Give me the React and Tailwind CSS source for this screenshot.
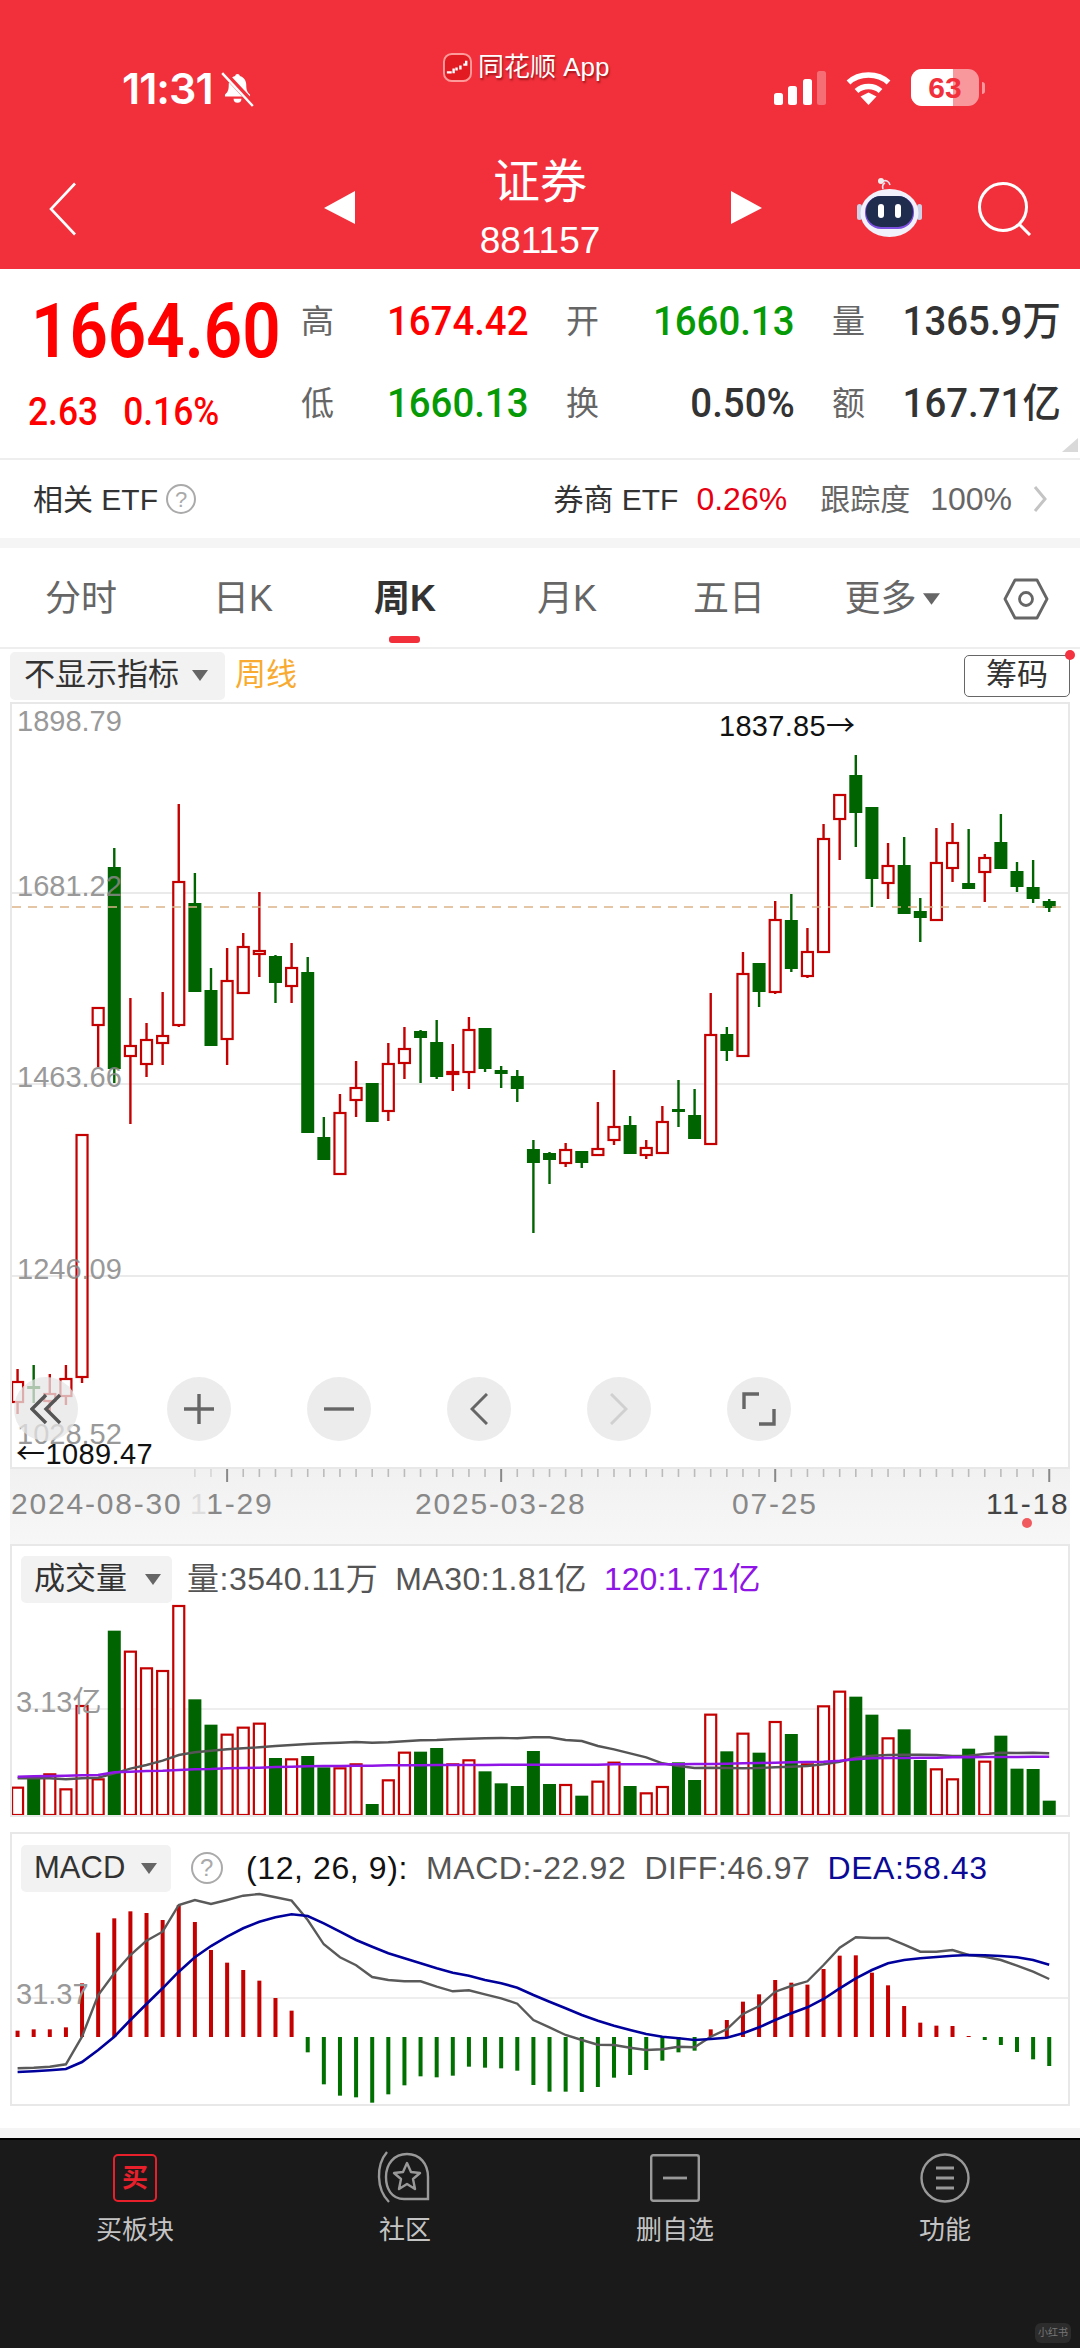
import React from 'react'

// [green?, wick top, body top, body bottom, wick bottom]
const candles = [
  [0, 1369, 1381, 1403, 1414], [1, 1365, 1386, 1389, 1403], [0, 1374, 1393, 1402, 1414], [0, 1365, 1378, 1397, 1405],
  [0, 1134, 1134, 1378, 1383], [0, 1007, 1007, 1026, 1067], [1, 848, 867, 1069, 1083], [0, 998, 1045, 1057, 1124],
  [0, 1023, 1039, 1065, 1077], [0, 992, 1035, 1044, 1065], [0, 804, 881, 1026, 1027], [1, 873, 903, 992, 992],
  [1, 968, 990, 1046, 1046], [0, 948, 980, 1040, 1065], [0, 933, 946, 994, 994], [0, 892, 950, 955, 977],
  [1, 955, 956, 983, 1003], [0, 943, 967, 987, 1003], [1, 957, 972, 1133, 1133], [1, 1117, 1137, 1160, 1160],
  [0, 1094, 1112, 1175, 1175], [0, 1061, 1087, 1101, 1117], [1, 1083, 1083, 1122, 1122], [0, 1043, 1063, 1112, 1121],
  [0, 1027, 1048, 1064, 1079], [1, 1030, 1031, 1038, 1083], [1, 1020, 1042, 1077, 1079], [0, 1044, 1071, 1075, 1091],
  [0, 1017, 1029, 1073, 1089], [1, 1028, 1028, 1069, 1072], [1, 1066, 1070, 1074, 1088], [1, 1070, 1076, 1089, 1102],
  [1, 1140, 1149, 1163, 1233], [1, 1152, 1153, 1160, 1184], [0, 1143, 1149, 1164, 1167], [1, 1151, 1151, 1163, 1168],
  [0, 1102, 1148, 1156, 1156], [0, 1070, 1126, 1141, 1145], [1, 1116, 1125, 1154, 1154], [0, 1140, 1147, 1156, 1159],
  [0, 1106, 1121, 1154, 1154], [1, 1080, 1109, 1112, 1127], [1, 1089, 1115, 1139, 1139], [0, 993, 1034, 1145, 1145],
  [1, 1027, 1034, 1051, 1061], [0, 952, 973, 1057, 1057], [1, 963, 963, 992, 1007], [0, 901, 919, 993, 994],
  [1, 894, 920, 969, 972], [0, 928, 951, 977, 978], [0, 824, 838, 953, 953], [0, 794, 794, 820, 860],
  [1, 755, 775, 813, 847], [1, 807, 807, 879, 907], [0, 843, 865, 884, 899], [1, 837, 865, 914, 914],
  [1, 898, 911, 918, 942], [0, 828, 862, 921, 921], [0, 823, 842, 869, 882], [1, 829, 883, 889, 889],
  [0, 854, 857, 873, 902], [1, 814, 842, 869, 869], [1, 862, 871, 887, 892], [1, 860, 887, 899, 903],
  [1, 899, 901, 908, 912],
]

const volTops = [770, 745, 730, 775, 525, 745, 302, 362, 412, 420, 225, 508, 584, 611, 590, 578, 684, 685, 678, 712, 712, 700, 822, 748, 665, 665, 654, 700, 688, 724, 760, 768, 663, 762, 762, 797, 752, 695, 768, 787, 768, 697, 750, 551, 664, 608, 668, 573, 612, 700, 526, 482, 500, 554, 622, 598, 690, 715, 745, 656, 692, 617, 716, 717, 812]
const ma30 = [745, 745, 745, 748, 745, 743, 730, 716, 705, 692, 675, 667, 662, 658, 655, 652, 648, 645, 642, 640, 638, 636, 638, 637, 634, 631, 630, 628, 626, 625, 624, 625, 622, 622, 630, 633, 648, 658, 670, 682, 700, 708, 714, 713, 714, 715, 714, 712, 710, 708, 703, 695, 683, 677, 675, 674, 674, 675, 678, 677, 672, 668, 669, 668, 670]
const ma120 = [740, 739, 738, 737, 736, 735, 727, 725, 723, 722, 720, 718, 717, 715, 714, 713, 711, 710, 709, 708, 708, 707, 707, 706, 706, 706, 705, 705, 705, 705, 704, 704, 704, 704, 704, 704, 704, 703, 703, 703, 703, 703, 702, 702, 701, 700, 699, 698, 697, 696, 695, 692, 688, 685, 684, 684, 683, 683, 682, 682, 681, 681, 681, 680, 680]
const macd = [632, 628, 628, 622, 490, 338, 295, 274, 279, 300, 255, 306, 390, 428, 450, 482, 534, 572, 697, 793, 827, 832, 848, 823, 796, 769, 772, 767, 740, 743, 745, 752, 795, 815, 815, 816, 801, 773, 765, 750, 722, 697, 692, 628, 600, 545, 523, 480, 488, 494, 447, 407, 406, 458, 496, 558, 608, 617, 618, 648, 660, 675, 696, 718, 738]
const diff = [745, 743, 740, 733, 650, 525, 460, 405, 362, 335, 255, 240, 252, 240, 227, 222, 232, 242, 300, 373, 412, 436, 471, 480, 484, 484, 500, 514, 511, 523, 535, 551, 600, 622, 645, 660, 674, 675, 683, 690, 688, 680, 682, 650, 628, 582, 558, 515, 498, 484, 435, 383, 352, 354, 354, 374, 395, 395, 390, 405, 410, 420, 437, 455, 477]
const dea = [756, 754, 751, 747, 726, 690, 650, 600, 552, 505, 455, 412, 378, 350, 325, 305, 292, 283, 288, 310, 335, 360, 380, 400, 415, 430, 445, 458, 467, 480, 490, 503, 525, 545, 565, 585, 602, 617, 630, 642, 650, 655, 660, 657, 653, 640, 622, 600, 580, 562, 537, 505, 475, 450, 430, 420, 415, 411, 407, 405, 406, 408, 412, 420, 434]

const RED = '#c40000'
const GREEN = '#006400'
const xAt = (i) => 17.56 + 16.12 * i
const linePoints = (arr, base) => arr.map((v, i) => `${xAt(i).toFixed(1)},${(base + v / 3).toFixed(1)}`).join(' ')

function Caret({ className }) {
  return (
    <svg viewBox="0 0 16 11" className={className}>
      <polygon points="0,0 16,0 8,11" fill="#666" />
    </svg>
  )
}

function Question({ className }) {
  return (
    <div className={`rounded-full border-2 border-[#aaa] text-[#aaa] flex items-center justify-center ${className}`}>?</div>
  )
}

function CandleChart() {
  return (
    <svg viewBox="12 704 1056 763" className="absolute inset-0 w-full h-full">
      <line x1="12" x2="1068" y1="893" y2="893" stroke="#eaeaea" strokeWidth="2" />
      <line x1="12" x2="1068" y1="1084" y2="1084" stroke="#eaeaea" strokeWidth="2" />
      <line x1="12" x2="1068" y1="1276" y2="1276" stroke="#eaeaea" strokeWidth="2" />
      {candles.map(([g, wt, bt, bb, wb], i) => {
        const x = xAt(i)
        const c = g ? GREEN : RED
        return (
          <g key={i}>
            <line x1={x} x2={x} y1={wt} y2={wb} stroke={c} strokeWidth="2.4" />
            {g ? (
              <rect x={x - 6.5} y={bt} width="13" height={bb - bt} fill={c} />
            ) : (
              <rect x={x - 5.5} y={bt + 1} width="11" height={bb - bt - 2} fill="#fff" stroke={c} strokeWidth="2.2" />
            )}
          </g>
        )
      })}
      <line x1="12" x2="1068" y1="907" y2="907" stroke="#dcb489" strokeWidth="1.6" strokeDasharray="9 7" />
    </svg>
  )
}

function VolumeChart() {
  return (
    <svg viewBox="12 1546 1056 269" className="absolute inset-0 w-full h-full">
      <line x1="26" x2="1068" y1="1709" y2="1709" stroke="#e8e8e8" strokeWidth="1.5" />
      {volTops.map((t, i) => {
        const x = xAt(i)
        const top = 1530 + t / 3
        return candles[i][0] ? (
          <rect key={i} x={x - 6.5} y={top} width="13" height={1815 - top} fill={GREEN} />
        ) : (
          <rect key={i} x={x - 5.5} y={top + 1} width="11" height={1814 - top} fill="#fff" stroke={RED} strokeWidth="2.2" />
        )
      })}
      <polyline points={linePoints(ma30, 1530)} fill="none" stroke="#555" strokeWidth="2.4" />
      <polyline points={linePoints(ma120, 1530)} fill="none" stroke="#8f14e6" strokeWidth="2.6" />
    </svg>
  )
}

function MacdChart() {
  return (
    <svg viewBox="12 1834 1056 270" className="absolute inset-0 w-full h-full">
      <line x1="26" x2="1068" y1="1998" y2="1998" stroke="#e8e8e8" strokeWidth="1.5" />
      {macd.map((v, i) => {
        const y = 1820 + v / 3
        const up = y < 2037
        return (
          <rect key={i} x={xAt(i) - 2} y={up ? y : 2037} width="4" height={Math.abs(y - 2037)} fill={up ? RED : '#007000'} />
        )
      })}
      <polyline points={linePoints(diff, 1820)} fill="none" stroke="#5a5a5a" strokeWidth="2.4" />
      <polyline points={linePoints(dea, 1820)} fill="none" stroke="#00009c" strokeWidth="2.6" />
    </svg>
  )
}

function AxisTicks() {
  const ticks = []
  for (let i = 11; i < 65; i++) {
    const major = i === 13 || i === 30 || i === 47 || i === 64
    ticks.push(
      <line key={i} x1={xAt(i) - 10} x2={xAt(i) - 10} y1="0" y2={major ? 13 : 8} stroke={major ? '#888' : '#bbb'} strokeWidth={major ? 2 : 1.6} opacity={i < 13 ? 0.5 : 1} />
    )
  }
  return (
    <svg viewBox="0 0 1060 16" className="absolute left-0 top-0 w-[1060px] h-[16px]">
      {ticks}
    </svg>
  )
}

function ZoomBtn({ children, className = '' }) {
  return <div className={`w-[64px] h-[64px] rounded-full bg-[#e6e6e6]/75 flex items-center justify-center ${className}`}>{children}</div>
}

function Robot() {
  return (
    <svg viewBox="0 0 65 60" className="w-[65px] h-[60px]">
      <path d="M26 12c-1-3 0-5 2-6M26 4c3-1 6 0 7 4" fill="none" stroke="#e8e8f4" strokeWidth="1.6" />
      <circle cx="24" cy="4" r="3" fill="#eee" />
      <rect x="0" y="27" width="5" height="16" rx="2.500" fill="#cdd0e6" />
      <rect x="60" y="27" width="5" height="16" rx="2.500" fill="#cdd0e6" />
      <ellipse cx="32.500" cy="36" rx="29" ry="24" fill="#f0f1fa" />
      <rect x="8" y="19" width="49" height="33" rx="16" fill="#7c4fe0" />
      <rect x="9" y="19" width="47" height="31" rx="15" fill="#1f2c4d" />
      <rect x="21" y="27" width="6" height="14" rx="3" fill="#fff" />
      <rect x="38" y="27" width="6" height="14" rx="3" fill="#fff" />
    </svg>
  )
}

export default function App() {
  return (
    <div className="w-[1080px] h-[2348px] bg-white flex flex-col overflow-hidden font-['Liberation_Sans','Noto_Sans_CJK_SC',sans-serif] text-[#333]">
      {/* top red header */}
      <div className="relative h-[269px] bg-[#f1303b] text-white shrink-0">
        <div className="absolute left-[443px] top-[52px] flex items-center gap-[6px] text-[26px] leading-[30px] [text-shadow:1px_2px_2px_rgba(90,0,0,.55)]">
          <svg viewBox="0 0 30 30" className="w-[29px] h-[29px]">
            <rect x="1" y="1" width="28" height="28" rx="8" fill="#e21a22" stroke="#ff9a9a" strokeWidth="2" />
            <path d="M4 20h5M11 16v5M14 15v3M18 13v4M21 12h3v-4" fill="none" stroke="#fff" strokeWidth="2.500" />
          </svg>
          <span>同花顺 App</span>
        </div>

        <div className="h-[150px] pt-[67px] pl-[122px] pr-[95px] flex items-start justify-between">
          <div className="flex items-center gap-[7px]">
            <span className="text-[43px] leading-[42px] font-semibold font-['Inter',sans-serif] tracking-[-1px]">11:31</span>
            <svg viewBox="0 0 24 24" className="w-[35px] h-[37px]">
              <path d="M12 2c-.9 0-1.500.6-1.600 1.400C7.600 4.200 6 6.600 6 9.500c0 3.500-.6 5-2.600 6.700v1.300h17.200v-1.300C18.600 14.500 18 13 18 9.500c0-2.900-1.600-5.300-4.400-6.100C13.500 2.600 12.900 2 12 2z" fill="#fff" />
              <path d="M9.300 19a2.700 2.700 0 0 0 5.400 0z" fill="#fff" />
              <line x1="2" y1="0.500" x2="23" y2="23" stroke="#f1303b" strokeWidth="4" />
              <line x1="1.500" y1="1.500" x2="22.500" y2="24" stroke="#fff" strokeWidth="1.700" />
            </svg>
          </div>
          <div className="flex items-center h-[39px] mt-[1px]">
            <svg viewBox="0 0 52 34" className="w-[52px] h-[34px] mr-[20px]">
              <rect x="0" y="22" width="9" height="12" rx="2.500" fill="#fff" />
              <rect x="14" y="15" width="9" height="19" rx="2.500" fill="#fff" />
              <rect x="29" y="8" width="9" height="26" rx="2.500" fill="#fff" />
              <rect x="43" y="0" width="9" height="34" rx="2.500" fill="#fff" fillOpacity="0.3" />
            </svg>
            <svg viewBox="0 0 45 34" className="w-[45px] h-[34px] mr-[20px]">
              <path d="M2.500 11.500C13 1.500 32 1.500 42.500 11.500" fill="none" stroke="#fff" strokeWidth="5.500" />
              <path d="M10.500 20C17 14 28 14 34.500 20" fill="none" stroke="#fff" strokeWidth="5.500" />
              <polygon points="22.500,34 14.500,25.500 22.500,21.500 30.500,25.500" fill="#fff" />
            </svg>
            <div className="relative w-[68px] h-[37px] rounded-[11px] bg-white/50 overflow-hidden">
              <div className="w-[42px] h-full bg-white" />
              <span className="absolute inset-0 flex items-center justify-center text-[30px] font-bold text-[#f1303b]">63</span>
            </div>
            <div className="w-[3px] h-[12px] ml-[3px] rounded-r-full bg-white/50" />
          </div>
        </div>

        <div className="flex items-center h-[103px] relative">
          <svg viewBox="0 0 28 54" className="absolute left-[49px] top-[32px] w-[28px] h-[54px]">
            <polyline points="26,1.500 2,27 26,52.500" fill="none" stroke="#fff" strokeWidth="2.600" />
          </svg>
          <svg viewBox="0 0 31 33" className="absolute left-[324px] top-[41px] w-[31px] h-[33px]">
            <polygon points="31,0 31,33 0,17" fill="#fff" />
          </svg>
          <div className="mx-auto mt-[13px] flex flex-col items-center">
            <span className="text-[47px] leading-[52px]">证券</span>
            <span className="text-[37px] leading-[40px] mt-[13px]">881157</span>
          </div>
          <svg viewBox="0 0 31 33" className="absolute left-[731px] top-[41px] w-[31px] h-[33px]">
            <polygon points="0,0 0,33 31,17" fill="#fff" />
          </svg>
          <div className="absolute left-[857px] top-[27px]"><Robot /></div>
          <svg viewBox="0 0 54 54" className="absolute left-[978px] top-[32px] w-[54px] h-[54px]">
            <circle cx="25" cy="25" r="23.500" fill="none" stroke="#fff" strokeWidth="3" />
            <line x1="41" y1="42" x2="52" y2="53" stroke="#fff" strokeWidth="3" />
          </svg>
        </div>
      </div>

      {/* quote summary */}
      <div className="relative h-[191px] border-b-2 border-[#eeeeee] flex shrink-0">
        <div className="w-[301px] pl-[31px] pt-[27px] font-['Roboto',sans-serif]">
          <div className="h-[70px] text-[76px] leading-[70px] font-semibold text-[#ff0000]">
            <span className="inline-block origin-left scale-x-[.885]">1664.60</span>
          </div>
          <div className="-ml-[3px] mt-[28px] text-[38px] leading-[36px] text-[#ff0000] font-medium">
            <span className="inline-flex gap-[27px] origin-left scale-x-[.93]">
              <span>2.63</span>
              <span>0.16%</span>
            </span>
          </div>
        </div>
        <div className="grid grid-cols-[228px_229px_229px] gap-x-[37px] grid-rows-[82px_82px] pt-[12px] text-[#666] text-[33px]">
          {[
            ['高', '1674.42', 'text-[#ff0000]'],
            ['开', '1660.13', 'text-[#069a06]'],
            ['量', '1365.9万', 'text-[#333]'],
            ['低', '1660.13', 'text-[#069a06]'],
            ['换', '0.50%', 'text-[#333]'],
            ['额', '167.71亿', 'text-[#333]'],
          ].map(([label, value, color]) => (
            <div key={label} className="flex items-center justify-between">
              <span>{label}</span>
              <span className={`inline-block origin-right scale-x-[.96] text-[40px] font-medium font-['Roboto','Noto_Sans_CJK_SC',sans-serif] ${color}`}>{value}</span>
            </div>
          ))}
        </div>
        <svg viewBox="0 0 16 14" className="absolute right-[2px] bottom-[6px] w-[16px] h-[14px]">
          <polygon points="16,0 16,14 0,14" fill="#d9d9d9" />
        </svg>
      </div>

      {/* related ETF */}
      <div className="h-[78px] flex items-center justify-between pl-[33px] pr-[33px] text-[30px] shrink-0">
        <div className="flex items-center gap-[8px] text-[#333]">
          <span>相关 ETF</span>
          <Question className="w-[30px] h-[30px] text-[22px]" />
        </div>
        <div className="flex items-center text-[#666]">
          <span className="text-[#333]">券商 ETF</span>
          <span className="ml-[18px] text-[32px] text-[#e60012]">0.26%</span>
          <span className="ml-[33px]">跟踪度</span>
          <span className="ml-[20px] text-[32px]">100%</span>
          <svg viewBox="0 0 14 26" className="w-[14px] h-[26px] ml-[21px]">
            <polyline points="2,1 12,13 2,25" fill="none" stroke="#c4c4c4" strokeWidth="3" />
          </svg>
        </div>
      </div>
      <div className="h-[10px] bg-[#f5f5f5] shrink-0" />

      {/* period tabs */}
      <div className="h-[101px] pt-[3px] border-b-2 border-[#eeeeee] flex items-center text-[36px] text-[#666] shrink-0">
        <div className="w-[162px] text-center">分时</div>
        <div className="w-[162px] text-center">日K</div>
        <div className="relative w-[162px] text-center font-bold text-[#333]">
          周K
          <div className="absolute left-[65px] top-[64px] w-[31px] h-[7px] rounded-[3px] bg-[#f1303b]" />
        </div>
        <div className="w-[162px] text-center">月K</div>
        <div className="w-[162px] text-center">五日</div>
        <div className="w-[162px] flex items-center justify-center gap-[6px] pl-[2px]">
          更多
          <Caret className="w-[17px] h-[12px]" />
        </div>
        <div className="flex-1 flex justify-center">
          <svg viewBox="0 0 46 42" className="w-[46px] h-[42px]">
            <polygon points="12,2 34,2 44,21 34,40 12,40 2,21" fill="none" stroke="#666" strokeWidth="2.800" strokeLinejoin="round" />
            <circle cx="23" cy="21" r="6.500" fill="none" stroke="#666" strokeWidth="2.800" />
          </svg>
        </div>
      </div>

      {/* indicator toolbar */}
      <div className="h-[53px] flex items-center px-[10px] text-[31px] shrink-0">
        <div className="h-[48px] w-[215px] rounded-[5px] bg-[#f2f2f2] flex items-center pl-[14px] gap-[13px] text-[#333]">
          <span>不显示指标</span>
          <Caret className="w-[16px] h-[11px]" />
        </div>
        <span className="ml-[10px] text-[#f8ab30]">周线</span>
        <div className="relative ml-auto w-[106px] h-[42px] rounded-[5px] border-[1.5px] border-[#666] flex items-center justify-center text-[#333]">
          筹码
          <div className="absolute -right-[6px] -top-[6px] w-[10px] h-[10px] rounded-full bg-[#f5323f]" />
        </div>
      </div>

      {/* candlestick panel */}
      <div className="relative mx-[10px] h-[767px] border-2 border-[#e8e8e8] shrink-0 text-[29px] leading-[29px]">
        <CandleChart />
        <span className="absolute left-[5px] top-[3px] text-[#999]">1898.79</span>
        <span className="absolute left-[5px] top-[168px] text-[#888] opacity-85">1681.22</span>
        <span className="absolute left-[5px] top-[359px] text-[#888] opacity-85">1463.66</span>
        <span className="absolute left-[5px] top-[551px] text-[#888] opacity-85">1246.09</span>
        <span className="absolute left-[5px] top-[716px] text-[#999]">1028.52</span>
        <span className="absolute left-[707px] top-[5px] text-[#111] tracking-[.3px]">1837.85<span className="font-['Noto_Sans_CJK_SC',sans-serif]">→</span></span>
        <div className="absolute left-[2px] top-[673px] flex gap-[76px]">
          <ZoomBtn className="mr-[13px]">
            <svg viewBox="0 0 32 32" className="w-[32px] h-[32px]">
              <polyline points="16,2 2,16 16,30" fill="none" stroke="#555" strokeWidth="3.400" />
              <polyline points="30,2 16,16 30,30" fill="none" stroke="#555" strokeWidth="3.400" />
            </svg>
          </ZoomBtn>
          <ZoomBtn>
            <svg viewBox="0 0 30 30" className="w-[30px] h-[30px]">
              <path d="M0 15h30M15 0v30" stroke="#666" strokeWidth="3.400" />
            </svg>
          </ZoomBtn>
          <ZoomBtn>
            <svg viewBox="0 0 30 30" className="w-[30px] h-[30px]">
              <path d="M0 15h30" stroke="#666" strokeWidth="3.400" />
            </svg>
          </ZoomBtn>
          <ZoomBtn>
            <svg viewBox="0 0 18 32" className="w-[18px] h-[32px]">
              <polyline points="17,1 2,16 17,31" fill="none" stroke="#666" strokeWidth="3" />
            </svg>
          </ZoomBtn>
          <ZoomBtn>
            <svg viewBox="0 0 18 32" className="w-[18px] h-[32px]">
              <polyline points="1,1 16,16 1,31" fill="none" stroke="#d0d0d0" strokeWidth="3" />
            </svg>
          </ZoomBtn>
          <ZoomBtn>
            <svg viewBox="0 0 34 34" className="w-[34px] h-[34px]">
              <path d="M2 17V2h15M32 17v15H17" fill="none" stroke="#666" strokeWidth="3.400" />
            </svg>
          </ZoomBtn>
        </div>
        <span className="absolute left-[4px] top-[733px] text-[#111] tracking-[.4px]"><span className="font-['Noto_Sans_CJK_SC',sans-serif]">←</span>1089.47</span>
      </div>

      {/* date axis */}
      <div className="relative mx-[10px] h-[75px] bg-gradient-to-b from-[#f1f1f1] to-[#f7f7f7] text-[#888] text-[30px] leading-[30px] tracking-[1.8px] shrink-0">
        <AxisTicks />
        <span className="absolute left-[1px] top-[20px]">2024-08-30</span>
        <span className="absolute left-[180px] top-[20px]"><span className="opacity-20">1</span>1-29</span>
        <span className="absolute left-[405px] top-[20px]">2025-03-28</span>
        <span className="absolute left-[722px] top-[20px]">07-25</span>
        <span className="absolute left-[976px] top-[20px] text-[#444]">11-18</span>
        <div className="absolute left-[1012px] top-[49px] w-[10px] h-[10px] rounded-full bg-[#f05a5f]" />
      </div>

      {/* volume panel */}
      <div className="relative mx-[10px] h-[273px] border-2 border-[#e8e8e8] shrink-0">
        <VolumeChart />
        <div className="relative flex items-center pt-[9px] pl-[9px] text-[32px] tracking-[.5px] text-[#555]">
          <div className="w-[151px] h-[47px] rounded-[5px] bg-[#f2f2f2] flex items-center pl-[13px] gap-[18px] text-[31px] tracking-normal text-[#333]">
            <span>成交量</span>
            <Caret className="w-[16px] h-[11px]" />
          </div>
          <span className="ml-[15px]">量:3540.11万</span>
          <span className="ml-[17px]">MA30:1.81亿</span>
          <span className="ml-[17px] tracking-normal text-[#8f14e6]">120:1.71亿</span>
        </div>
        <span className="absolute left-[4px] top-[142px] text-[29px] leading-[29px] text-[#999]">3.13亿</span>
      </div>
      <div className="h-[15px] shrink-0" />

      {/* macd panel */}
      <div className="relative mx-[10px] h-[274px] border-2 border-[#e8e8e8] shrink-0">
        <MacdChart />
        <div className="relative flex items-center pt-[10px] pl-[9px] text-[32px] tracking-[.6px] text-[#555]">
          <div className="w-[150px] h-[47px] rounded-[5px] bg-[#f2f2f2] flex items-center pl-[13px] gap-[16px] text-[31px] tracking-normal text-[#333]">
            <span>MACD</span>
            <Caret className="w-[16px] h-[11px]" />
          </div>
          <Question className="ml-[20px] w-[32px] h-[32px] text-[24px] text-[#999]" />
          <span className="ml-[23px] text-[#111]">(12, 26, 9):</span>
          <span className="ml-[18px]">MACD:-22.92</span>
          <span className="ml-[18px]">DIFF:46.97</span>
          <span className="ml-[17px] text-[#0a0a96]">DEA:58.43</span>
        </div>
        <span className="absolute left-[4px] top-[146px] text-[29px] leading-[29px] text-[#999]">31.37</span>
      </div>
      <div className="h-[22px] shrink-0" />
      <div className="h-[10px] bg-[#f5f5f5] shrink-0" />

      {/* bottom action bar */}
      <div className="relative flex-1 bg-[#1a1a1a] border-t-2 border-black grid grid-cols-4 items-start pt-[14px] text-[26px] leading-[30px] text-[#c4c4c4]">
        <div className="flex flex-col items-center">
          <div className="w-[44px] h-[48px] rounded-[5px] border-[2.5px] border-[#e8202c] flex items-center justify-center text-[#e8202c] text-[26px] font-bold">买</div>
          <span className="mt-[13px]">买板块</span>
        </div>
        <div className="flex flex-col items-center">
          <svg viewBox="0 0 54 52" className="w-[54px] h-[52px] -mt-[3px] -ml-[2px]">
            <path d="M10 1C-1 14 -1 38 12 51" fill="none" stroke="#999" strokeWidth="2.400" />
            <path d="M50 48H27C14 48 9 37 9 26 9 13 17 3 30 3s21 10 21 23v22z" fill="none" stroke="#999" strokeWidth="2.400" />
            <polygon points="30,12 34,21 43,22 36,28 38,38 30,33 22,38 24,28 17,22 26,21" fill="none" stroke="#999" strokeWidth="2.400" strokeLinejoin="round" />
          </svg>
          <span className="mt-[12px]">社区</span>
        </div>
        <div className="flex flex-col items-center">
          <svg viewBox="0 0 50 48" className="w-[50px] h-[48px]">
            <rect x="1.200" y="1.200" width="47.600" height="45.600" rx="2" fill="none" stroke="#999" strokeWidth="2.400" />
            <path d="M13 24h24" stroke="#999" strokeWidth="2.800" />
          </svg>
          <span className="mt-[13px]">删自选</span>
        </div>
        <div className="flex flex-col items-center">
          <svg viewBox="0 0 50 50" className="w-[50px] h-[50px] -mt-[1px]">
            <circle cx="25" cy="25" r="23.500" fill="none" stroke="#999" strokeWidth="2.400" />
            <path d="M16 15h18M16 25h18M16 35h18" stroke="#999" strokeWidth="2.800" />
          </svg>
          <span className="mt-[12px]">功能</span>
        </div>
        <div className="absolute left-[1035px] top-[183px] w-[36px] h-[20px] rounded-[6px] bg-[#2c2c2c] flex items-center justify-center text-[10px] leading-[10px] text-[#777]">小红书</div>
      </div>
    </div>
  )
}
